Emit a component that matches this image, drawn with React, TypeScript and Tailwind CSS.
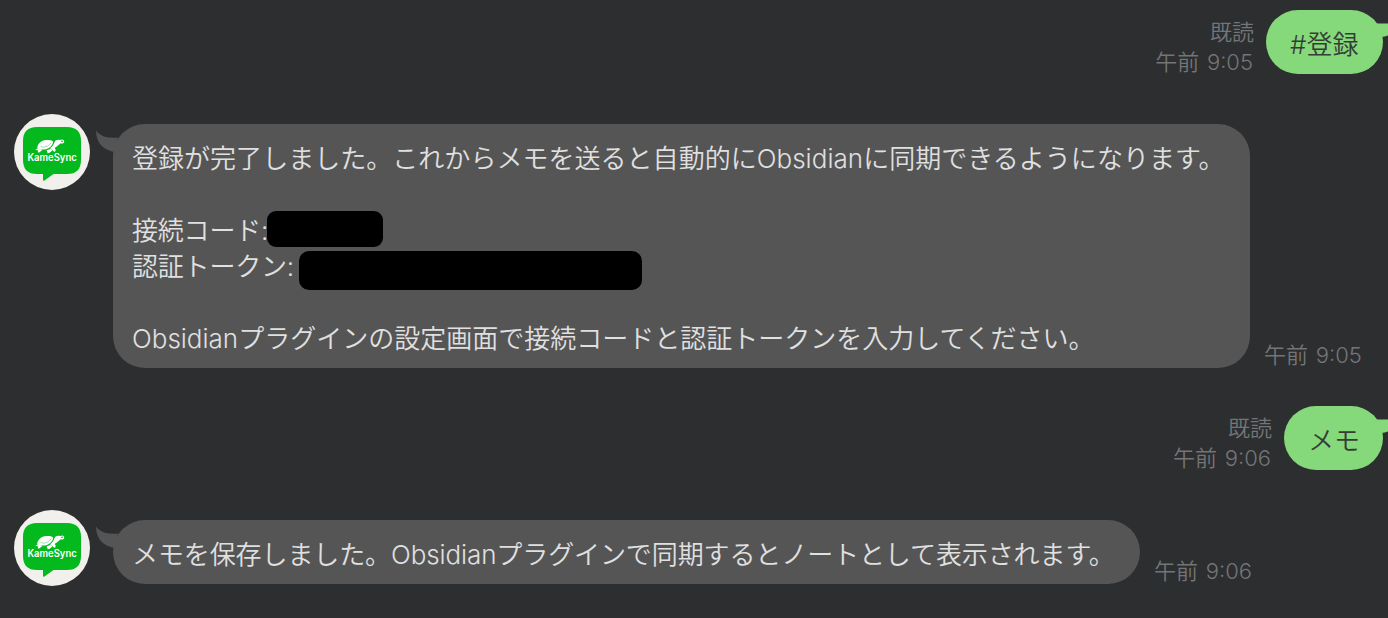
import type { ReactNode } from "react";

function Avatar() {
  return (
    <svg viewBox="0 0 76 76" className="size-[76px] shrink-0" role="img" aria-label="KameSync">
      <circle cx="38" cy="38" r="38" fill="#f2f0ec" />
      <path
        d="M23 13H53Q67 13 67 27V46Q67 60 53 60H39.5L30.5 66.5Q29 67.3 29 65.5V60H23Q9 60 9 46V27Q9 13 23 13Z"
        fill="#04b91e"
      />
      <g fill="#fff">
        <path d="M23.3 34.4C23 30.5 26.5 26.4 32 26C35 25.8 37.8 26.3 39 27.4C39.4 30.3 36 34.4 31 35.4C28.5 35.8 25.5 35.4 23.3 34.4Z" />
        <path d="M36 34.3C38.5 32.6 39.6 30.4 40.6 28C41.4 26 43.8 25.1 46 26L48.6 25.5C50.9 26.3 50.7 29 48.5 29.4L46.2 29.6C44.6 31.6 42.5 32.6 40.6 34.1C41.7 35.2 42.1 36.6 41 37.7C39.5 37.2 38.6 36.5 38 35.4Z" />
        <path d="M21.2 35.4L24.5 34.2L28.4 36L25.2 38.4Q24 38.7 23.8 37.9L24.2 36.4Z" />
        <path d="M32.6 36.2L37.3 34.8L38.2 36.5Q36.2 39 33.7 39.2Z" />
      </g>
      <path
        d="M26.5 32.6L30.2 33.2L34.4 31.6L37.2 28.8"
        fill="none"
        stroke="#04b91e"
        strokeWidth="0.4"
      />
      <circle cx="48" cy="27.4" r="0.8" fill="#04b91e" />
      <text
        x="13.4"
        y="46.8"
        textLength="49.4"
        lengthAdjust="spacingAndGlyphs"
        fill="#fff"
        fontSize="10"
        fontWeight="600"
        fontFamily="Inter, sans-serif"
      >
        KameSync
      </text>
    </svg>
  );
}

function Time({ value, read = false }: { value: string; read?: boolean }) {
  return (
    <div className="flex flex-col items-end text-[22px] leading-[30px] font-[350] [word-spacing:1.5px] whitespace-nowrap text-[#747577]">
      {read && <span>既読</span>}
      <span className={read ? "pr-px" : ""}>午前 {value}</span>
    </div>
  );
}

function Sent({ children, time }: { children: ReactNode; time: string }) {
  return (
    <div className="flex h-16 justify-end pr-[5px]">
      <div className="mr-3 pt-[7px]">
        <Time value={time} read />
      </div>
      <div className="relative flex items-center rounded-[32px] bg-[#86d97b] pt-[5px] pr-[25px] pl-6 text-[26px] leading-9 font-[350] whitespace-nowrap text-[#353d35]">
        {children}
        <svg className="absolute top-2 -right-[5px]" width="24" height="22" viewBox="0 0 24 22">
          <path d="M5 0L12 5.5H24V17.5Q21 18.8 17 19Z" fill="#86d97b" />
        </svg>
      </div>
    </div>
  );
}

function Received({ children, time }: { children: ReactNode; time: string }) {
  return (
    <div className="flex pl-[14px]">
      <div className="-mt-[10px] mr-[23px] -mb-[10px]">
        <Avatar />
      </div>
      <div className="relative rounded-[32px] bg-[#555555] pt-[17px] pb-[11px] pl-[19px] text-[26px] leading-9 font-[350] whitespace-nowrap text-[#e0e0e0]">
        <svg className="absolute top-[6px] -left-[17px]" width="30" height="24" viewBox="0 0 30 24">
          <path d="M0 .5C4 6 10 8.5 22 7.5L19 22C9 21 0 14 0 .5Z" fill="#555555" />
        </svg>
        {children}
      </div>
      <div className="-mb-[2px] ml-[14px] flex items-end">
        <Time value={time} />
      </div>
    </div>
  );
}

export default function App() {
  return (
    <main
      lang="ja"
      className="flex h-[618px] w-[1388px] flex-col overflow-hidden bg-[#2d2e30] pt-[10px] font-['Inter','Noto_Sans_CJK_JP',sans-serif]"
    >
      <Sent time="9:05">
        <div className="w-[68px]">#登録</div>
      </Sent>
      <div className="mt-[50px]">
        <Received time="9:05">
          <div className="w-[1118px]">
            <p className="tracking-[0.03px]">
              登録が完了しました。これからメモを送ると自動的にObsidianに同期できるようになります。
            </p>
            <div className="mt-9 flex h-9">
              <span className="w-[135px] tracking-[-0.2px]">接続コード:</span>
              <span className="-mt-[2px] h-9 w-[116px] rounded-[9px] bg-black" />
            </div>
            <div className="flex h-9">
              <span className="w-[167px] tracking-[-0.2px]">認証トークン:</span>
              <span className="mt-[2px] h-[39px] w-[343px] shrink-0 rounded-[10px] bg-black" />
            </div>
            <p className="mt-9">Obsidianプラグインの設定画面で接続コードと認証トークンを入力してください。</p>
          </div>
        </Received>
      </div>
      <div className="mt-[38px]">
        <Sent time="9:06">
          <div className="w-[50px]">メモ</div>
        </Sent>
      </div>
      <div className="mt-[50px]">
        <Received time="9:06">
          <p className="w-[1008px] tracking-[-0.1px]">
            メモを保存しました。Obsidianプラグインで同期するとノートとして表示されます。
          </p>
        </Received>
      </div>
    </main>
  );
}
